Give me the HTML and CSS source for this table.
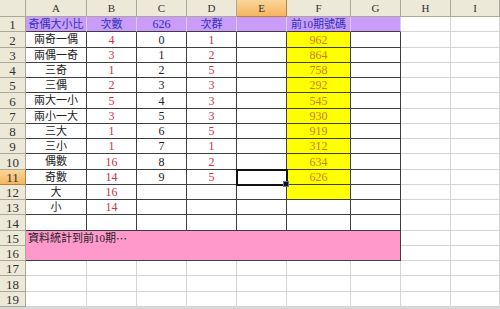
FILE: index.html
```html
<!DOCTYPE html>
<html>
<head>
<meta charset="utf-8">
<link rel="stylesheet" href="styles.css">
</head>
<body>
<div class="sheet">
  <div class="hd corner"></div>
  <div class="hd">A</div><div class="hd">B</div><div class="hd">C</div><div class="hd">D</div><div class="hd sel">E</div><div class="hd">F</div><div class="hd">G</div><div class="hd">H</div><div class="hd">I</div>

  <div class="hd rn">1</div>
  <div class="t p cjk">奇偶大小比</div><div class="t p cjk">次數</div><div class="t p">626</div><div class="t p cjk">次群</div><div class="t p"></div><div class="t p cjk">前10期號碼</div><div class="t p"></div><div></div><div></div>

  <div class="hd rn">2</div>
  <div class="t cjk">兩奇一偶</div><div class="t r">4</div><div class="t">0</div><div class="t r">1</div><div class="t"></div><div class="t y o">962</div><div class="t"></div><div></div><div></div>

  <div class="hd rn">3</div>
  <div class="t cjk">兩偶一奇</div><div class="t r">3</div><div class="t">1</div><div class="t r">2</div><div class="t"></div><div class="t y o">864</div><div class="t"></div><div></div><div></div>

  <div class="hd rn">4</div>
  <div class="t cjk">三奇</div><div class="t r">1</div><div class="t">2</div><div class="t r">5</div><div class="t"></div><div class="t y o">758</div><div class="t"></div><div></div><div></div>

  <div class="hd rn">5</div>
  <div class="t cjk">三偶</div><div class="t r">2</div><div class="t">3</div><div class="t r">3</div><div class="t"></div><div class="t y o">292</div><div class="t"></div><div></div><div></div>

  <div class="hd rn">6</div>
  <div class="t cjk">兩大一小</div><div class="t r">5</div><div class="t">4</div><div class="t r">3</div><div class="t"></div><div class="t y o">545</div><div class="t"></div><div></div><div></div>

  <div class="hd rn">7</div>
  <div class="t cjk">兩小一大</div><div class="t r">3</div><div class="t">5</div><div class="t r">3</div><div class="t"></div><div class="t y o">930</div><div class="t"></div><div></div><div></div>

  <div class="hd rn">8</div>
  <div class="t cjk">三大</div><div class="t r">1</div><div class="t">6</div><div class="t r">5</div><div class="t"></div><div class="t y o">919</div><div class="t"></div><div></div><div></div>

  <div class="hd rn">9</div>
  <div class="t cjk">三小</div><div class="t r">1</div><div class="t">7</div><div class="t r">1</div><div class="t"></div><div class="t y o">312</div><div class="t"></div><div></div><div></div>

  <div class="hd rn">10</div>
  <div class="t cjk">偶數</div><div class="t r">16</div><div class="t">8</div><div class="t r">2</div><div class="t"></div><div class="t y o">634</div><div class="t"></div><div></div><div></div>

  <div class="hd rn sel">11</div>
  <div class="t cjk">奇數</div><div class="t r">14</div><div class="t">9</div><div class="t r">5</div><div class="t active"></div><div class="t y o">626</div><div class="t"></div><div></div><div></div>

  <div class="hd rn">12</div>
  <div class="t cjk">大</div><div class="t r">16</div><div class="t"></div><div class="t"></div><div class="t"></div><div class="t y"></div><div class="t"></div><div></div><div></div>

  <div class="hd rn">13</div>
  <div class="t cjk">小</div><div class="t r">14</div><div class="t"></div><div class="t"></div><div class="t"></div><div class="t"></div><div class="t"></div><div></div><div></div>

  <div class="hd rn">14</div>
  <div class="t"></div><div class="t"></div><div class="t"></div><div class="t"></div><div class="t"></div><div class="t"></div><div class="t"></div><div></div><div></div>

  <div class="hd rn">15</div>
  <div class="t pink cjk">資料統計到前10期<span class="ell">…</span></div><div></div><div></div>

  <div class="hd rn">16</div>
  <div></div><div></div>

  <div class="hd rn">17</div>
  <div></div><div></div><div></div><div></div><div></div><div></div><div></div><div></div><div></div>

  <div class="hd rn">18</div>
  <div></div><div></div><div></div><div></div><div></div><div></div><div></div><div></div><div></div>

  <div class="hd rn">19</div>
  <div></div><div></div><div></div><div></div><div></div><div></div><div></div><div></div><div></div>
</div>
<div class="edge"></div>
</body>
</html>
```
FILE: styles.css
```css
html, body {
  margin: 0;
  padding: 0;
  background: #ffffff;
}

body {
  font-family: "Liberation Serif", "Noto Sans CJK TC", serif;
  width: 500px;
  height: 309px;
  overflow: hidden;
}

.sheet {
  display: grid;
  grid-template-columns: 26px 61px 50px 50px 50px 50px 64px 50px 50px 49px;
  grid-template-rows: 17px 15px 16px 15px 15px 15px 16px 15px 15px 15px 16px 15px 15px 15px 16px 15px 15px 15px 16px 15px;
  width: 500px;
}

.sheet > div {
  display: flex;
  align-items: center;
  justify-content: center;
  box-sizing: border-box;
  border-right: 1px solid #d4d4d4;
  border-bottom: 1px solid #d4d4d4;
  font-size: 12px;
  line-height: 1;
  color: #222;
  white-space: nowrap;
  overflow: hidden;
}

.sheet > .hd {
  background: #ece9d8;
  color: #333;
  border-right-color: #aca899;
  border-bottom-color: #aca899;
  font-size: 11px;
}

.sheet > .hd.rn {
  font-size: 13px;
  padding-top: 1px;
}

.sheet > .hd.sel {
  background: linear-gradient(#fbd59a, #f4b660);
  border-right-color: #c08030;
  border-bottom-color: #c08030;
}

.sheet > .t {
  border-right-color: #3e3e3e;
  border-bottom-color: #3e3e3e;
}

.sheet > .cjk {
  font-size: 11px;
}

.sheet > .p {
  background: #c89cf8;
  color: #3030b8;
  border-right-color: #dcc8fb;
}

.sheet > .y {
  background: #ffff00;
}

.sheet > .r {
  color: #cc3346;
}

.sheet > .o {
  color: #cc8000;
}

.sheet > .active {
  position: relative;
  z-index: 2;
  overflow: visible;
  outline: 2px solid #111;
  outline-offset: -1px;
}

.sheet > .active::after {
  content: "";
  position: absolute;
  right: -3px;
  bottom: -3px;
  width: 4px;
  height: 4px;
  background: #111;
  border: 1px solid #6a6ad0;
}

.sheet > .pink {
  grid-column: 2 / span 7;
  grid-row: span 2;
  background: #ff99cc;
  justify-content: flex-start;
  align-items: flex-start;
  padding: 2px 0 0 2px;
  color: #222;
}

.ell {
  font-family: "Noto Sans CJK TC", sans-serif;
}

.edge {
  height: 2px;
  background: #d8d8d8;
}
```
